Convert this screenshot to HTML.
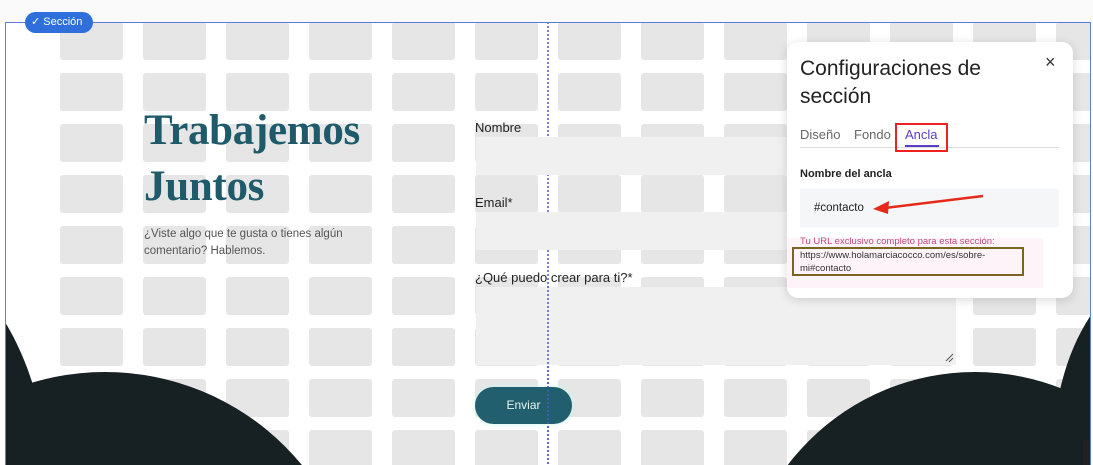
<!DOCTYPE html>
<html><head><meta charset="utf-8"><style>
*{margin:0;padding:0;box-sizing:border-box}
html,body{width:1093px;height:465px;overflow:hidden}
body{background:#fff;position:relative;font-family:"Liberation Sans",sans-serif}
.top{position:absolute;left:0;top:0;width:1093px;height:22px;background:#fafafa}
.sec{position:absolute;left:5px;top:22px;width:1086px;height:443px;border:1px solid #5b7fd6;border-bottom:none;overflow:hidden;background:#fff}
.t{position:absolute;width:63px;height:38px;background:#e6e6e6;border-radius:3px}
.abs{position:absolute}
.inp{position:absolute;left:470px;width:480px;background:#f0f0f0}
</style></head><body>
<div class="top"></div>
<div class="sec" id="sec">
<div id="grid"></div>
<svg class="abs" style="left:-6px;top:-23px" width="1093" height="465">
<line x1="548" y1="22" x2="548" y2="465" stroke="#4a55d8" stroke-width="1.5" stroke-dasharray="2,2"/>
</svg>
<div class="inp" style="top:114px;height:38px"></div>
<div class="inp" style="top:189px;height:38px"></div>
<div class="inp" style="top:264px;height:78px"></div>
<svg class="abs" style="left:-6px;top:-23px" width="1093" height="465">
<path d="M5,322 Q22,350 33,385 L5,465 Z" fill="#172022"/>
<circle cx="105" cy="627" r="255" fill="#172022"/>
<circle cx="975" cy="607" r="235" fill="#172022"/>
<path d="M1093,312 Q1070,345 1060,390 L1093,465 Z" fill="#172022"/>
<path d="M946,361 L953,354 M949,362 L953,358" stroke="#555" stroke-width="1"/>
<rect x="1083" y="440" width="6" height="25" fill="#222"/>
<line x1="548" y1="286" x2="548" y2="465" stroke="#4a55d8" stroke-width="1.5" stroke-dasharray="2,2"/>
</svg>
<div class="abs" style="left:138px;top:80px;font-family:'Liberation Serif',serif;font-weight:bold;font-size:43px;line-height:56px;color:#1f5a6b;letter-spacing:-0.3px">Trabajemos<br>Juntos</div>
<div class="abs" style="left:138px;top:203px;font-size:11.5px;line-height:17px;color:#555">¿Viste algo que te gusta o tienes algún<br>comentario? Hablemos.</div>
<div class="abs" style="left:469px;top:97px;font-size:13px;color:#222">Nombre</div>
<div class="abs" style="left:469px;top:172px;font-size:13px;color:#222">Email*</div>
<div class="abs" style="left:469px;top:247px;font-size:13px;color:#222">¿Qué puedo crear para ti?*</div>
<div class="abs" style="left:469px;top:364px;width:97px;height:37px;border-radius:19px;background:#225f6e;color:#e8f4f4;font-size:12px;line-height:37px;text-align:center;box-shadow:0 0 6px #c8f4ee">Enviar</div>
<svg class="abs" style="left:-6px;top:-23px" width="1093" height="465">
<line x1="548" y1="382" x2="548" y2="430" stroke="#4a55d8" stroke-width="1.5" stroke-dasharray="2,2"/>
</svg>
</div>
<div class="abs" style="left:25px;top:12px;width:68px;height:21px;border-radius:11px;background:#2f6fdc;color:#fff;font-size:11px;line-height:21px;padding-left:6px">✓ Sección</div>
<div class="abs" style="left:787px;top:42px;width:286px;height:256px;background:#fff;border-radius:11px;box-shadow:0 2px 10px rgba(0,0,0,.15)">
<div class="abs" style="left:13px;top:13px;font-size:21px;line-height:28px;color:#222">Configuraciones de<br>sección</div>
<div class="abs" style="left:258px;top:10px;font-size:18px;color:#333">×</div>
<div class="abs" style="left:13px;top:85px;font-size:13px;color:#666">Diseño</div>
<div class="abs" style="left:67px;top:85px;font-size:13px;color:#666">Fondo</div>
<div class="abs" style="left:118px;top:85px;font-size:13px;color:#5a3ec8">Ancla</div>
<div class="abs" style="left:13px;top:105px;width:259px;height:1px;background:#ddd"></div>
<div class="abs" style="left:118px;top:103px;width:34px;height:2px;background:#5a3ec8"></div>
<div class="abs" style="left:108px;top:81px;width:53px;height:29px;border:2px solid #e22"></div>
<div class="abs" style="left:13px;top:126px;font-size:11px;font-weight:bold;color:#222">Nombre del ancla</div>
<div class="abs" style="left:13px;top:147px;width:259px;height:38px;background:#f4f6f8"></div>
<div class="abs" style="left:27px;top:160px;font-size:11.5px;color:#222">#contacto</div>
<svg class="abs" style="left:0;top:0" width="286" height="256"><line x1="196" y1="154" x2="98" y2="166" stroke="#e52a1a" stroke-width="2.5"/><path d="M86,167 L102,159 L101,172 Z" fill="#e52a1a"/></svg>
<div class="abs" style="left:0px;top:196px;width:256px;height:50px;background:#fdf3f9"></div>
<div class="abs" style="left:13px;top:194px;font-size:9.5px;color:#c04a78">Tu URL exclusivo completo para esta sección:</div>
<div class="abs" style="left:5px;top:205px;width:232px;height:29px;border:2px solid #7a6420"></div>
<div class="abs" style="left:13px;top:207px;font-size:9.5px;line-height:13px;color:#333">https://www.holamarciacocco.com/es/sobre-<br>mi#contacto</div>
</div>
<script>
var g=document.getElementById('grid'),h='';
for(var r=0;r<9;r++)for(var c=0;c<13;c++){h+='<div class="t" style="left:'+(54+83*c)+'px;top:'+(-1+51*r)+'px"></div>';}
g.innerHTML=h;
</script>
</body></html>
